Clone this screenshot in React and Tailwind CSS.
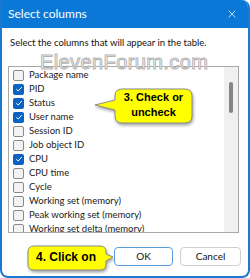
import { X } from "lucide-react";

const items = [
  { label: "Package name", on: false },
  { label: "PID", on: true },
  { label: "Status", on: true },
  { label: "User name", on: true },
  { label: "Session ID", on: false },
  { label: "Job object ID", on: false },
  { label: "CPU", on: true },
  { label: "CPU time", on: false },
  { label: "Cycle", on: false },
  { label: "Working set (memory)", on: false },
  { label: "Peak working set (memory)", on: false },
  { label: "Working set delta (memory)", on: false },
];

function Box({ on }) {
  if (on) {
    return (
      <span className="w-[11px] h-[11px] rounded-[2px] bg-[#0a62c2] grid place-items-center shrink-0">
        <svg width="8" height="8" viewBox="0 0 8 8">
          <path d="M1.3 4.2 L3.2 6 L6.8 2" fill="none" stroke="white" strokeWidth="1" />
        </svg>
      </span>
    );
  }
  return <span className="w-[11px] h-[11px] rounded-[2px] bg-[#f3f3f3] border border-[#8a8a8a] shrink-0" />;
}

export default function App() {
  return (
    <div className="w-[250px] h-[278px] bg-white relative overflow-hidden font-['Lato',sans-serif]">
      <div className="h-full flex flex-col border-2 border-t-0 border-[#1b78d0] rounded-tr-[8px] rounded-b-[8px] overflow-hidden">
        {/* title bar */}
        <div className="h-[28px] shrink-0 bg-[#0a78d6] flex items-center justify-between pl-[6px] pr-[10px] text-white text-[12px]">
          <span>Select columns</span>
          <X size={12} strokeWidth={1.5} />
        </div>

        <div className="flex-1 flex flex-col px-[6px]">
          <p className="mt-[8px] h-[14px] text-[9.5px] leading-[14px] text-[#111] pl-[2px] whitespace-nowrap">
            Select the columns that will appear in the table.
          </p>

          {/* list box */}
          <div className="mt-[16px] w-[231px] h-[167px] border border-[#a8a8a8] flex">
            <div className="flex-1 overflow-hidden pt-[1px]">
              {items.map((it) => (
                <div key={it.label} className="h-[14px] flex items-center gap-[5px] pl-[4px] text-[9.5px] text-[#1a1a1a] whitespace-nowrap">
                  <Box on={it.on} />
                  <span>{it.label}</span>
                </div>
              ))}
            </div>
            <div className="w-[14px] bg-[#f0f0f0] flex justify-center pt-[15px]">
              <div className="w-[4px] h-[31px] rounded-full bg-[#858585]" />
            </div>
          </div>

          {/* buttons */}
          <div className="mt-[14px] flex justify-end gap-[7px] pr-[1px]">
            <button className="w-[59px] h-[19px] rounded-[4px] border border-[#5a9ce0] bg-white text-[10px] text-[#111]">
              OK
            </button>
            <button className="w-[61px] h-[19px] rounded-[4px] border border-[#cfcfcf] bg-white text-[10px] text-[#111]">
              Cancel
            </button>
          </div>
        </div>
      </div>

      {/* watermark */}
      <div className="absolute left-[40px] top-[48px] text-[20px] leading-[28px] font-['Liberation_Sans',sans-serif] text-white [-webkit-text-stroke:1px_#b4b4b4] tracking-[0.4px]">
        ElevenForum.com
      </div>

      {/* callout 3 */}
      <div className="absolute left-[94px] top-[86px] w-[102px] h-[42px]">
        <svg width="102" height="42" className="absolute inset-0">
          <path
            d="M28 3 H91 Q98 3 98 10 V30 Q98 37 91 37 H28 Q21 37 21 30 V24 L1 19 L21 14 V10 Q21 3 28 3 Z"
            fill="#ffff00"
            stroke="#8a8a8a"
            strokeWidth="1"
            style={{ filter: "drop-shadow(1px 2px 1.5px rgba(0,0,0,0.35))" }}
          />
        </svg>
        <div className="absolute left-[21px] top-[4px] w-[77px] text-center text-[11px] leading-[15px] font-bold text-black font-['Liberation_Sans',sans-serif]">
          3. Check or
          <br />
          uncheck
        </div>
      </div>

      {/* callout 4 */}
      <div className="absolute left-[26px] top-[244px] w-[90px] h-[30px]">
        <svg width="90" height="30" className="absolute inset-0">
          <path
            d="M8 2 H74 Q80 2 80 8 V10 L87 13 L80 17 V20 Q80 26 74 26 H8 Q2 26 2 20 V8 Q2 2 8 2 Z"
            fill="#ffff00"
            stroke="#8a8a8a"
            strokeWidth="1"
            style={{ filter: "drop-shadow(1px 2px 1.5px rgba(0,0,0,0.35))" }}
          />
        </svg>
        <div className="absolute left-[10px] top-[6px] text-[12px] leading-[14px] font-bold text-black font-['Liberation_Sans',sans-serif]">
          4. Click on
        </div>
      </div>
    </div>
  );
}
